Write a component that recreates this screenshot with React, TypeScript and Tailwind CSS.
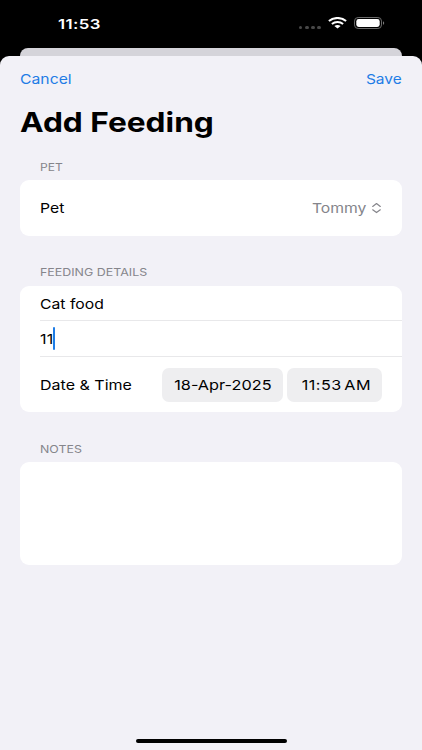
import type { ReactNode } from 'react';
import { clsx } from 'clsx';

interface LabelProps {
  children: ReactNode;
  className?: string;
}

// Wide text: every label is set in Inter and widened horizontally
function Label({ children, className }: LabelProps) {
  return <span className={clsx('inline-block whitespace-pre', className)}>{children}</span>;
}

function SectionTitle({ children, className }: LabelProps) {
  return (
    <h2 className="flex h-[14px] items-center pl-5 text-[10.5px] leading-[14px] text-[#85858b]">
      <Label className={clsx('origin-left', className)}>{children}</Label>
    </h2>
  );
}

function WifiIcon() {
  return (
    <svg width="19" height="12" viewBox="0 0 19 12" fill="none" stroke="#fff" strokeWidth="2">
      <path d="M0.9 4.1C5.7 -0.1 13.3 -0.1 18.1 4.1" />
      <path d="M3.9 6.9C7.1 4.2 11.9 4.2 15.1 6.9" />
      <path d="M6.4 9.1C8.1 7.6 10.9 7.6 12.6 9.1L9.5 11.6Z" fill="#fff" stroke="none" />
    </svg>
  );
}

function BatteryIcon() {
  return (
    <svg width="31" height="12" viewBox="0 0 31 12" fill="none">
      <rect x="0.5" y="0.5" width="27" height="11" rx="3.6" stroke="#6b6b6b" />
      <rect x="2.3" y="2" width="23.4" height="8" rx="2.4" fill="#fff" />
      <path d="M29 4.2C30.6 4.6 30.6 7.4 29 7.8Z" fill="#7a7a7a" />
    </svg>
  );
}

function StatusBar() {
  return (
    <div className="flex h-12 items-start justify-between pl-[58px] pr-[37px] text-white">
      <Label className="mt-[14px] origin-left scale-x-[1.23] text-[13.7px] font-semibold leading-5 tracking-[0.3px] [font-kerning:none]">11:53</Label>
      <div className="mt-[17px] flex items-start">
        <div className="mr-[7px] mt-[9px] flex gap-[2.4px]">
          {[0, 1, 2, 3].map((dot) => (
            <span key={dot} className="h-[3px] w-[3.8px] rounded-full bg-[#484848]" />
          ))}
        </div>
        <WifiIcon />
        <div className="ml-[7px]">
          <BatteryIcon />
        </div>
      </div>
    </div>
  );
}

export default function App() {
  return (
    <div className="flex h-[750px] w-[422px] flex-col overflow-hidden bg-black font-['Inter',sans-serif] text-[13.7px] leading-5 text-black">
      <StatusBar />
      <div className="mx-5 h-2 shrink-0 rounded-t-[9px] bg-[#d5d4da]" />

      <main className="flex flex-1 flex-col rounded-t-[9px] bg-[#f2f1f7] px-5">
        <div className="mt-[13px] flex h-5 items-center justify-between text-[#1f7de6]">
          <button>
            <Label className="origin-left scale-x-[1.15]">Cancel</Label>
          </button>
          <button>
            <Label className="origin-right scale-x-[1.13]">Save</Label>
          </button>
        </div>

        <h1 className="mt-[15px] h-9 text-[27.4px] font-bold leading-9">
          <Label className="origin-left scale-x-[1.155]">Add Feeding</Label>
        </h1>

        <div className="mt-[21px]">
          <SectionTitle className="scale-x-[1.15]">PET</SectionTitle>
          <div className="mt-[5px] flex h-14 items-center justify-between rounded-[9px] bg-white px-5">
            <Label className="origin-left scale-x-[1.15]">Pet</Label>
            <div className="flex items-center text-[#85858b]">
              <Label className="origin-right scale-x-[1.15]">Tommy</Label>
              <svg className="ml-[6px] mr-[1px]" width="9" height="11" viewBox="0 0 9 11" fill="none" stroke="currentColor" strokeWidth="1.2" strokeLinecap="round" strokeLinejoin="round">
                <path d="M0.7 3.4L4.5 0.6L8.3 3.4M0.7 6.8L4.5 9.6L8.3 6.8" />
              </svg>
            </div>
          </div>
        </div>

        <div className="mt-[30px]">
          <SectionTitle className="scale-x-[1.185]">FEEDING DETAILS</SectionTitle>
          <div className="mt-[6px] h-[126px] rounded-[9px] bg-white pl-5">
            <div className="flex h-[35px] items-center border-b border-[#e8e8ea] pt-[2px]">
              <Label className="origin-left scale-x-[1.15]">Cat food</Label>
            </div>
            <div className="flex h-[36px] items-center border-b border-[#e8e8ea]">
              <div className="flex w-[15px] items-center justify-between">
                <Label className="w-[13px] origin-left scale-x-[1.17] tracking-[0.3px] [font-kerning:none]">11</Label>
                <span className="h-[23px] w-[2px] shrink-0 rounded-full bg-[#1f7de6]" />
              </div>
            </div>
            <div className="flex h-[55px] items-center justify-between pr-5">
              <Label className="origin-left scale-x-[1.17]">Date &amp; Time</Label>
              <div className="flex gap-1">
                <div className="flex h-[34px] w-[121px] items-center justify-center rounded-[7px] bg-[#eeeef0]">
                  <Label className="scale-x-[1.19]">18-Apr-2025</Label>
                </div>
                <div className="flex h-[34px] w-[95px] items-center justify-center rounded-[7px] bg-[#eeeef0] pl-[3px]">
                  <Label className="scale-x-[1.18] tracking-[0.4px] [font-kerning:none] [word-spacing:-2px]">11:53 AM</Label>
                </div>
              </div>
            </div>
          </div>
        </div>

        <div className="mt-[31px]">
          <SectionTitle className="scale-x-[1.18]">NOTES</SectionTitle>
          <div className="mt-[5px] h-[103px] rounded-[9px] bg-white" />
        </div>

        <div className="mb-[7px] mt-auto h-1 w-[151px] self-center rounded-full bg-black" />
      </main>
    </div>
  );
}
